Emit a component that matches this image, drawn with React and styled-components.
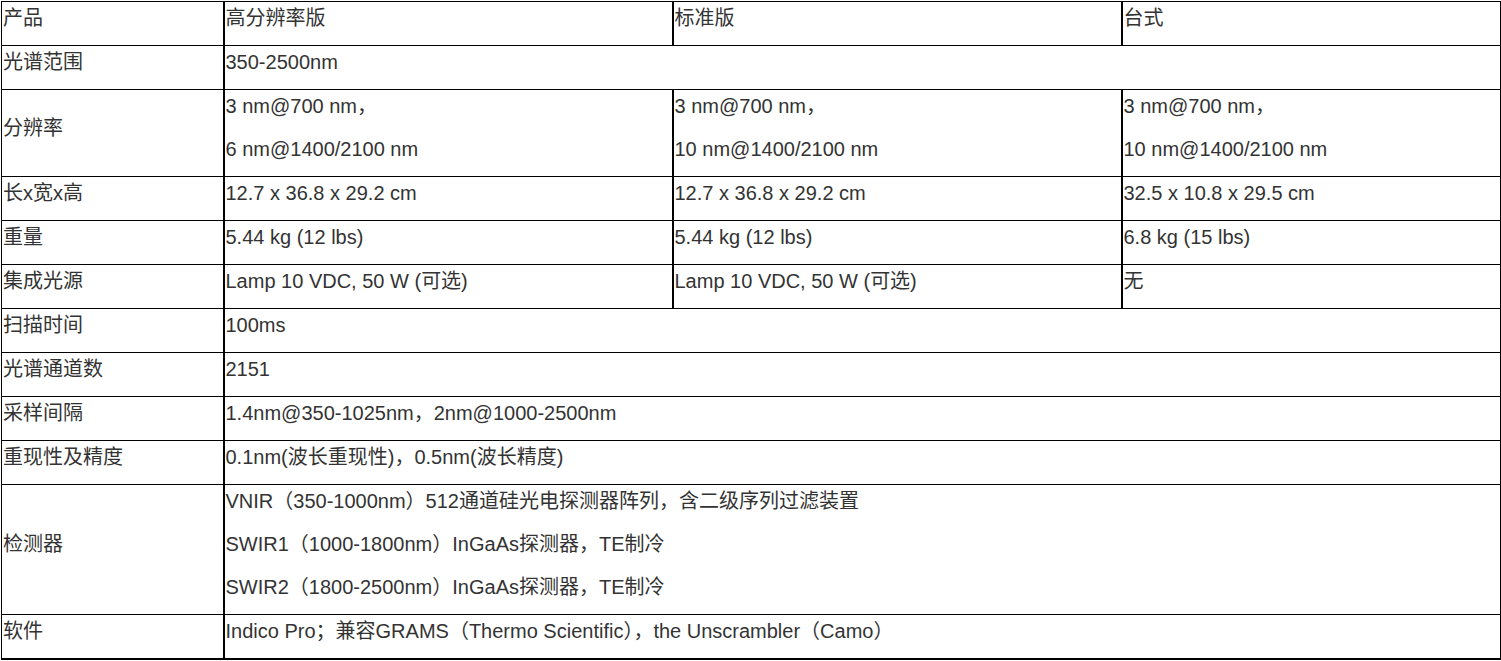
import styled, { createGlobalStyle } from 'styled-components';

const GlobalStyle = createGlobalStyle`
  html, body {
    margin: 0;
    padding: 0;
    background: #fff;
  }
  body {
    font-family: "Liberation Sans", Arial, "Noto Sans CJK SC", sans-serif;
    color: #333;
  }
`;

const Page = styled.div`
  padding: 1px 0 0 1px;
`;

const SpecTable = styled.table`
  width: 1499px;
  table-layout: fixed;
  border-collapse: collapse;
  font-size: 20px;
`;

const Col = styled.col`
  width: ${(p) => p.$w}px;
`;

const Cell = styled.td`
  border: 1px solid #000;
  border-right-width: 2px;
  padding: 0 1px;
  vertical-align: ${(p) => (p.$label ? 'middle' : 'top')};
  text-align: left;

  tr:last-child > & {
    border-bottom-width: 2px;
  }
`;

const Line = styled.p`
  margin: 0 0 11px;
  line-height: 32px;
  white-space: nowrap;
`;

const widths = [222, 449, 449, 379];

const rows = [
  { label: '产品', cells: [['高分辨率版'], ['标准版'], ['台式']] },
  { label: '光谱范围', span: ['350-2500nm'] },
  {
    label: '分辨率',
    cells: [
      ['3 nm@700 nm，', '6 nm@1400/2100 nm'],
      ['3 nm@700 nm，', '10 nm@1400/2100 nm'],
      ['3 nm@700 nm，', '10 nm@1400/2100 nm'],
    ],
  },
  {
    label: '长x宽x高',
    cells: [['12.7 x 36.8 x 29.2 cm'], ['12.7 x 36.8 x 29.2 cm'], ['32.5 x 10.8 x 29.5 cm']],
  },
  { label: '重量', cells: [['5.44 kg (12 lbs)'], ['5.44 kg (12 lbs)'], ['6.8 kg (15 lbs)']] },
  {
    label: '集成光源',
    cells: [['Lamp 10 VDC, 50 W (可选)'], ['Lamp 10 VDC, 50 W (可选)'], ['无']],
  },
  { label: '扫描时间', span: ['100ms'] },
  { label: '光谱通道数', span: ['2151'] },
  { label: '采样间隔', span: ['1.4nm@350-1025nm，2nm@1000-2500nm'] },
  { label: '重现性及精度', span: ['0.1nm(波长重现性)，0.5nm(波长精度)'] },
  {
    label: '检测器',
    span: [
      'VNIR（350-1000nm）512通道硅光电探测器阵列，含二级序列过滤装置',
      'SWIR1（1000-1800nm）InGaAs探测器，TE制冷',
      'SWIR2（1800-2500nm）InGaAs探测器，TE制冷',
    ],
  },
  { label: '软件', span: ['Indico Pro；兼容GRAMS（Thermo Scientific），the Unscrambler（Camo）'] },
];

const Lines = ({ items }) => items.map((t, i) => <Line key={i}>{t}</Line>);

export default function App() {
  return (
    <Page>
      <GlobalStyle />
      <SpecTable>
        <colgroup>
          {widths.map((w, i) => (
            <Col key={i} $w={w} />
          ))}
        </colgroup>
        <tbody>
          {rows.map((r) => (
            <tr key={r.label}>
              <Cell $label>
                <Line>{r.label}</Line>
              </Cell>
              {r.span ? (
                <Cell colSpan={3}>
                  <Lines items={r.span} />
                </Cell>
              ) : (
                r.cells.map((c, i) => (
                  <Cell key={i}>
                    <Lines items={c} />
                  </Cell>
                ))
              )}
            </tr>
          ))}
        </tbody>
      </SpecTable>
    </Page>
  );
}
